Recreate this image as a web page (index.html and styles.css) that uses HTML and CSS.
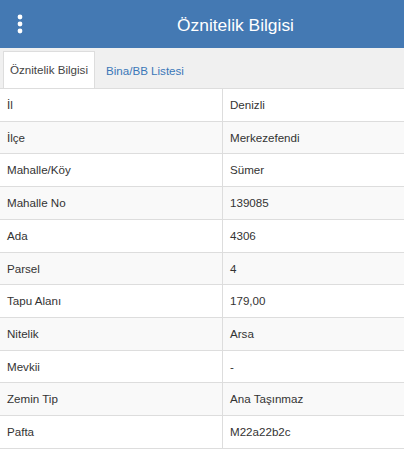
FILE: index.html
```html
<!DOCTYPE html>
<html lang="tr">
<head>
<meta charset="utf-8">
<title>Öznitelik Bilgisi</title>
<link rel="stylesheet" href="styles.css">
</head>
<body>
<header class="topbar">
  <div class="menu-btn">
    <svg width="6" height="20" viewBox="0 0 6 20" aria-hidden="true">
      <circle cx="3" cy="3" r="2.4" fill="#fff"/>
      <circle cx="3" cy="10" r="2.4" fill="#fff"/>
      <circle cx="3" cy="17" r="2.4" fill="#fff"/>
    </svg>
  </div>
  <h1 class="title">Öznitelik Bilgisi</h1>
</header>
<nav class="tabs">
  <div class="tab active">Öznitelik Bilgisi</div>
  <div class="tab">Bina/BB Listesi</div>
</nav>
<table class="attr">
  <tbody>
    <tr><td>İl</td><td>Denizli</td></tr>
    <tr><td>İlçe</td><td>Merkezefendi</td></tr>
    <tr><td>Mahalle/Köy</td><td>Sümer</td></tr>
    <tr><td>Mahalle No</td><td>139085</td></tr>
    <tr><td>Ada</td><td>4306</td></tr>
    <tr><td>Parsel</td><td>4</td></tr>
    <tr><td>Tapu Alanı</td><td>179,00</td></tr>
    <tr><td>Nitelik</td><td>Arsa</td></tr>
    <tr><td>Mevkii</td><td>-</td></tr>
    <tr><td>Zemin Tip</td><td>Ana Taşınmaz</td></tr>
    <tr><td>Pafta</td><td>M22a22b2c</td></tr>
  </tbody>
</table>
</body>
</html>
```

FILE: styles.css
```css
html, body {
  margin: 0;
  padding: 0;
  background: #fff;
}
body {
  font-family: "Liberation Sans", Arial, sans-serif;
  color: #333;
  width: 404px;
  overflow: hidden;
}
.topbar {
  height: 48px;
  background: #4479b3;
  display: grid;
  grid-template-columns: 67px 1fr;
  align-items: center;
}
.menu-btn {
  padding-left: 17px;
  display: flex;
  align-items: center;
  height: 48px;
}
.title {
  margin: 0;
  font-size: 17.4px;
  font-weight: normal;
  color: #fff;
  text-align: center;
  line-height: 20px;
  padding-top: 1px;
}
.tabs {
  height: 37px;
  padding: 3px 0 0 3px;
  background: #f0f0f0;
  border-bottom: 1px solid #dddddd;
  display: flex;
  align-items: stretch;
}
.tab {
  font-size: 11.6px;
  line-height: 37px;
  padding: 0 10px;
  color: #3a77b8;
  border: 1px solid transparent;
  border-bottom: none;
}
.tab.active {
  background: #fff;
  color: #444;
  border-color: #dddddd;
  padding: 0 6px;
  line-height: 36px;
}
.attr {
  width: 100%;
  border-collapse: collapse;
  font-size: 11.6px;
}
.attr td {
  height: 15.7px;
  line-height: 15.7px;
  padding: 8px 7px;
  border-bottom: 1px solid #dddddd;
  color: #333;
}
.attr td:first-child {
  width: 208px;
  border-right: 1px solid #dddddd;
}
.attr tr:nth-child(even) td {
  background: #f9f9f9;
}
```
